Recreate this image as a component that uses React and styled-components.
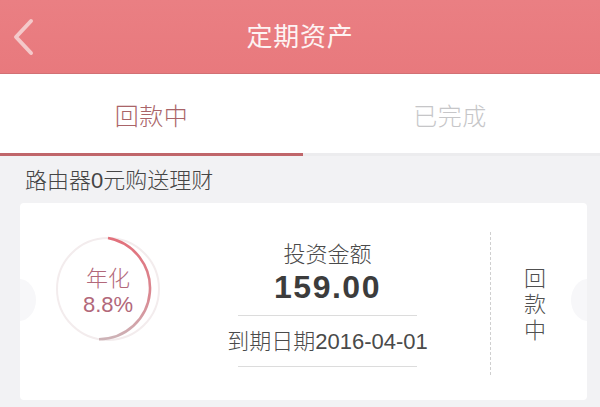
import React from "react";
import styled, { createGlobalStyle } from "styled-components";

const Global = createGlobalStyle`
  html, body { margin: 0; padding: 0; background: #f2f2f4; }
  body { font-family: "Liberation Sans", "Noto Sans CJK SC", sans-serif; font-weight: 300; }
  * { box-sizing: border-box; }
`;

const Page = styled.div`
  width: 600px;
  height: 407px;
  overflow: hidden;
  background: #f2f2f4;
  display: flex;
  flex-direction: column;
`;

const Header = styled.header`
  height: 74px;
  flex: none;
  background: linear-gradient(180deg, #ea7f83 0%, #e8797d 100%);
  border-bottom: 1px solid #d27074;
  display: grid;
  grid-template-columns: 80px 1fr 80px;
  align-items: center;
`;

const Back = styled.button`
  border: 0;
  background: none;
  padding: 0 0 0 11px;
  height: 40px;
  display: flex;
  align-items: center;
  cursor: pointer;
`;

const Title = styled.h1`
  margin: 0;
  text-align: center;
  color: #fdf3f3;
  font-size: 26px;
  font-weight: 400;
  line-height: 34px;
  letter-spacing: 0.8px;
`;

const Tabs = styled.nav`
  height: 82px;
  flex: none;
  background: #fff;
  display: grid;
  grid-template-columns: 303px 1fr;
  border-bottom: 3px solid #ececee;
`;

const Tab = styled.div`
  display: flex;
  align-items: center;
  justify-content: center;
  padding-top: 2px;
  font-size: 24px;
  letter-spacing: 0.5px;
  color: ${(p) => (p.$active ? "#a96468" : "#c6c6c8")};
  margin-bottom: -3px;
  border-bottom: 3px solid ${(p) => (p.$active ? "#c0666a" : "transparent")};
  margin-left: ${(p) => (p.$active ? "0" : "-3px")};
`;

const SectionTitle = styled.div`
  padding: 12px 0 0 25px;
  height: 47px;
  flex: none;
  font-size: 22px;
  line-height: 26px;
  color: #454545;
`;

const Card = styled.div`
  position: relative;
  margin: 0 13px 0 20px;
  height: 197px;
  background: #fff;
  border-radius: 4px;
  display: flex;
  align-items: flex-start;
  overflow: hidden;

  &::before,
  &::after {
    content: "";
    position: absolute;
    top: 76px;
    width: 34px;
    height: 42px;
    border-radius: 50%;
    background: #f7f7f9;
  }
  &::before { left: -18px; }
  &::after { right: -18px; }
`;

const Ring = styled.div`
  position: relative;
  flex: none;
  width: 106px;
  height: 106px;
  margin: 33px 0 0 35px;
  padding-top: 5px;
  display: flex;
  flex-direction: column;
  align-items: center;
  justify-content: center;
  color: #b2687a;
  font-size: 22px;
  line-height: 26px;

  svg {
    position: absolute;
    inset: 0;
  }
`;

const RingText = styled.span`
  position: relative;
`;

const Middle = styled.div`
  flex: none;
  width: 201px;
  margin: 39px 0 0 66px;
  display: flex;
  flex-direction: column;
  align-items: center;
  color: #444;
`;

const Label = styled.div`
  font-size: 22px;
  line-height: 26px;
  color: #4a4a4a;
`;

const Amount = styled.div`
  font-size: 32px;
  line-height: 38px;
  font-weight: 700;
  letter-spacing: 1.5px;
  color: #3c3c3c;
`;

const Rule = styled.div`
  width: 179px;
  height: 1px;
  background: #dcdcdc;
  margin: ${(p) => p.$m};
`;

const DateText = styled.div`
  font-size: 22px;
  line-height: 26px;
  color: #4a4a4a;
  white-space: nowrap;
`;

const Divider = styled.div`
  flex: none;
  width: 0;
  height: 143px;
  margin: 29px 0 0 62px;
  border-left: 1px dashed #cfcfcf;
`;

const Status = styled.div`
  flex: 1;
  margin-top: 63px;
  display: flex;
  flex-direction: column;
  align-items: center;
  padding-right: 8px;
  font-size: 22px;
  line-height: 26px;
  color: #505050;
`;

export default function App() {
  return (
    <Page>
      <Global />
      <Header>
        <Back aria-label="返回">
          <svg width="24" height="38" viewBox="0 0 24 38">
            <path d="M20 3 L5 19 L20 35" fill="none" stroke="#f4c9ca" strokeWidth="4" strokeLinecap="round" strokeLinejoin="round" />
          </svg>
        </Back>
        <Title>定期资产</Title>
        <span />
      </Header>
      <Tabs>
        <Tab $active>回款中</Tab>
        <Tab>已完成</Tab>
      </Tabs>
      <SectionTitle>路由器0元购送理财</SectionTitle>
      <Card>
        <Ring>
          <svg width="106" height="106" viewBox="0 0 106 106">
            <defs>
              <linearGradient id="arc" x1="0" y1="0" x2="0" y2="1">
                <stop offset="0" stopColor="#e2707b" />
                <stop offset="0.6" stopColor="#d98a93" />
                <stop offset="1" stopColor="#cdb3b7" />
              </linearGradient>
            </defs>
            <circle cx="53" cy="53" r="51" fill="none" stroke="#f3eced" strokeWidth="2" />
            <path d="M53 2 A51 51 0 0 1 44 103.2" fill="none" stroke="url(#arc)" strokeWidth="2.6" />
          </svg>
          <RingText>年化</RingText>
          <RingText>8.8%</RingText>
        </Ring>
        <Middle>
          <Label>投资金额</Label>
          <Amount>159.00</Amount>
          <Rule $m="9px 0 13px" />
          <DateText>到期日期2016-04-01</DateText>
          <Rule $m="11px 0 0" />
        </Middle>
        <Divider />
        <Status>
          <span>回</span>
          <span>款</span>
          <span>中</span>
        </Status>
      </Card>
    </Page>
  );
}
